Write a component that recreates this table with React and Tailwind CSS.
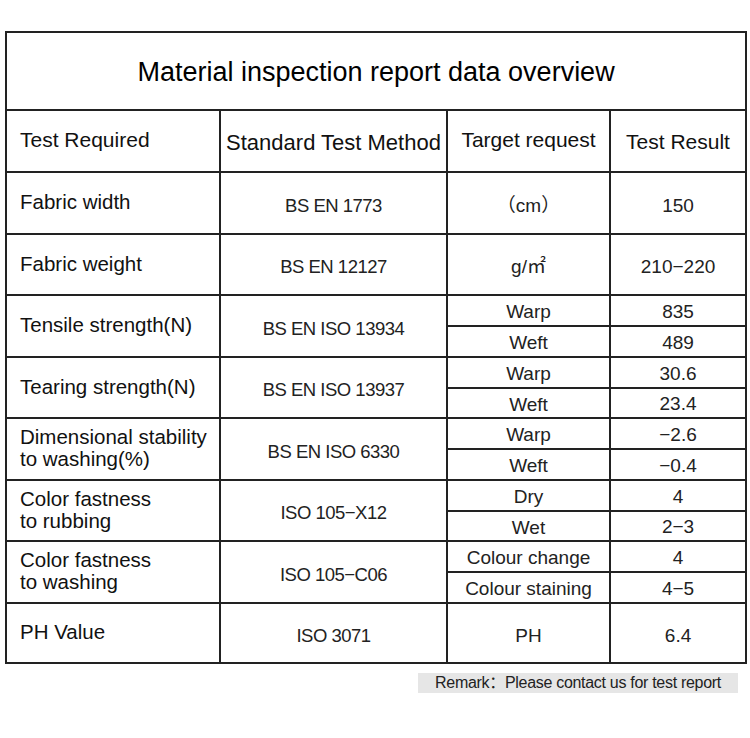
const rows = [
  { label: 'Fabric width', method: 'BS EN 1773', h: 62, subs: [{ t: '（cm）', r: '150' }] },
  { label: 'Fabric weight', method: 'BS EN 12127', h: 61, subs: [{ t: 'g/㎡', r: '210−220' }] },
  { label: 'Tensile strength(N)', method: 'BS EN ISO 13934', h: 62, subs: [{ t: 'Warp', r: '835' }, { t: 'Weft', r: '489' }] },
  { label: 'Tearing strength(N)', method: 'BS EN ISO 13937', h: 61, subs: [{ t: 'Warp', r: '30.6' }, { t: 'Weft', r: '23.4' }] },
  { label: ['Dimensional stability', 'to washing(%)'], method: 'BS EN ISO 6330', h: 62, subs: [{ t: 'Warp', r: '−2.6' }, { t: 'Weft', r: '−0.4' }] },
  { label: ['Color fastness', 'to rubbing'], method: 'ISO 105−X12', h: 61, subs: [{ t: 'Dry', r: '4' }, { t: 'Wet', r: '2−3' }] },
  { label: ['Color fastness', 'to washing'], method: 'ISO 105−C06', h: 62, subs: [{ t: 'Colour change', r: '4' }, { t: 'Colour staining', r: '4−5' }] },
  { label: 'PH Value', method: 'ISO 3071', h: 60, subs: [{ t: 'PH', r: '6.4' }] },
];

const cell = 'border-2 border-[#222]';

export default function App() {
  return (
    <div
      className="w-[750px] h-[738px] bg-white pt-[31px] px-[5px] text-[#111]"
      style={{ fontFamily: '"Liberation Sans", "Noto Sans CJK SC", Arial, sans-serif' }}
    >
      <table className="w-[740px] border-collapse table-fixed">
        <colgroup>
          <col className="w-[214px]" />
          <col className="w-[227px]" />
          <col className="w-[163px]" />
          <col className="w-[136px]" />
        </colgroup>
        <tbody>
          <tr className="h-[78px]">
            <td colSpan={4} className={`${cell} text-center text-[27px] pt-[2px] text-black`}>
              Material inspection report data overview
            </td>
          </tr>
          <tr className="h-[62px] text-[21px]">
            <td className={`${cell} pl-[13px] pb-[2px]`}>Test Required</td>
            <td className={`${cell} text-center pt-[2px] whitespace-nowrap text-[22px]`}>Standard Test Method</td>
            <td className={`${cell} text-center pb-[2px]`}>Target request</td>
            <td className={`${cell} text-center pt-[2px]`}>Test Result</td>
          </tr>
          {rows.map((row, i) =>
            row.subs.map((s, j) => (
              <tr key={`${i}-${j}`} style={{ height: row.subs.length > 1 ? (j === 0 ? Math.ceil(row.h / 2) : Math.floor(row.h / 2)) : row.h }}>
                {j === 0 && (
                  <>
                    <td rowSpan={row.subs.length} className={`${cell} pl-[13px] text-[20.5px] leading-[22px] pb-[2px]`}>
                      {Array.isArray(row.label) ? row.label.map((l) => <div key={l}>{l}</div>) : row.label}
                    </td>
                    <td rowSpan={row.subs.length} className={`${cell} text-center text-[18.5px] leading-[22px] tracking-[-0.5px] text-[#222] pt-[5px]`}>
                      {row.method}
                    </td>
                  </>
                )}
                <td className={`border-b-2 border-[#222] text-center text-[19px] leading-[22px] text-[#222] ${row.subs.length === 1 ? 'pt-[5px]' : 'pt-[3px]'}`}>
                  {s.t}
                </td>
                <td className={`${cell} text-center text-[19px] leading-[22px] text-[#222] ${row.subs.length === 1 ? 'pt-[5px]' : 'pt-[2px]'}`}>
                  {s.r}
                </td>
              </tr>
            ))
          )}
        </tbody>
      </table>
      <div className="flex justify-end pr-[7px] mt-[9px]">
        <div className="w-[320px] h-[20px] bg-[#e6e6e6] flex items-center justify-center text-[16px] tracking-[-0.3px] text-[#222]">
          Remark：Please contact us for test report
        </div>
      </div>
    </div>
  );
}
